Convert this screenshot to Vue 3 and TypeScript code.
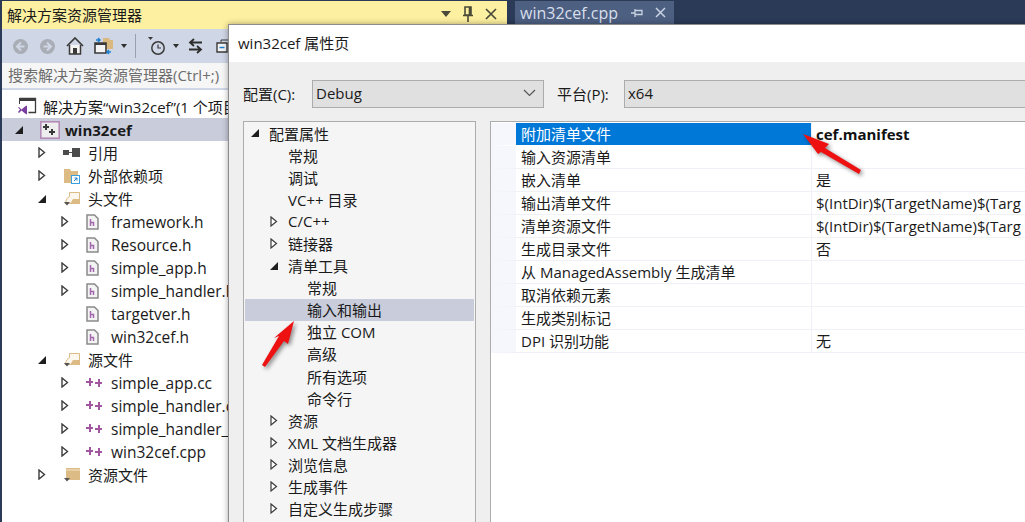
<template>
  <div class="ide">
    <!-- 解决方案资源管理器 -->
    <aside class="explorer">
      <header class="pane-title">
        <span>解决方案资源管理器</span>
        <div class="pane-actions">
          <svg width="10" height="6" viewBox="0 0 10 6"><path d="M0 0h10L5 6z" fill="#4a4a3a" /></svg>
          <svg width="12" height="16" viewBox="0 0 12 16"><path d="M3 1h6v8H3zM1 9.5h10M6 10v6M7.5 1v8" fill="none" stroke="#4a4a3a" stroke-width="1.6" /></svg>
          <svg width="12" height="12" viewBox="0 0 12 12"><path d="M1 1l10 10M11 1L1 11" stroke="#4a4a3a" stroke-width="1.7" /></svg>
        </div>
      </header>

      <div class="toolbar">
        <svg class="tb-back" width="15" height="15" viewBox="0 0 15 15"><circle cx="7.5" cy="7.5" r="7.5" fill="#a9adb5" /><path d="M8 3.5L4 7.5l4 4M4.5 7.5h7" fill="none" stroke="#cfd6e5" stroke-width="2" /></svg>
        <svg class="tb-forward" width="15" height="15" viewBox="0 0 15 15"><circle cx="7.5" cy="7.5" r="7.5" fill="#a9adb5" /><path d="M7 3.5l4 4-4 4M10.5 7.5h-7" fill="none" stroke="#cfd6e5" stroke-width="2" /></svg>
        <svg class="tb-home" width="18" height="18" viewBox="0 0 18 18"><path d="M1 9l8-8 8 8" fill="none" stroke="#3a3a3a" stroke-width="1.7" /><path d="M3.5 8v9h11V8" fill="#f4f4f4" stroke="#3a3a3a" stroke-width="1.5" /><path d="M7 17v-6h4v6" fill="#3a3a3a" /></svg>
        <svg class="tb-sync" width="19" height="18" viewBox="0 0 19 18"><path d="M9 1h6l1 2h3v9H9z" fill="#d9b97f" /><path d="M1 6h11v10H1z" fill="#f4f4f4" stroke="#3a3a3a" stroke-width="1.6" /><path d="M1 6h11v2H1z" fill="#3a3a3a" /><path d="M2 3h4M4 1l2 2-2 2" fill="none" stroke="#1a7fd0" stroke-width="1.4" /><path d="M17 15h-4M15 13l-2 2 2 2" fill="none" stroke="#1a7fd0" stroke-width="1.4" /></svg>
        <i class="tb-caret"></i>
        <span class="tb-sep"></span>
        <svg class="tb-clock" width="18" height="20" viewBox="0 0 18 20"><path d="M0 1h5L2.5 4z" fill="#3a3a3a" /><circle cx="10" cy="12" r="6.2" fill="none" stroke="#3a3a3a" stroke-width="1.5" /><path d="M10 8.5V12h3" fill="none" stroke="#3a3a3a" stroke-width="1.2" /></svg>
        <i class="tb-caret tb-caret-clock"></i>
        <svg class="tb-arrows" width="15" height="16" viewBox="0 0 15 16"><path d="M14 4.5H3M6 1L2 4.500l4 3.500M1 11.500h11M9 8l4 3.500L9 15" fill="none" stroke="#2e2e2e" stroke-width="1.8" /></svg>
        <svg class="tb-collapse" width="15" height="14" viewBox="0 0 15 14"><path d="M5 3V1h9v8h-2" fill="none" stroke="#3a3a3a" /><path d="M1 4h10v9H1z" fill="#f4f4f4" stroke="#3a3a3a" stroke-width="1.4" /><path d="M3.500 8.500h5" stroke="#1a7fd0" stroke-width="1.500" /></svg>
      </div>

      <div class="search">搜索解决方案资源管理器(Ctrl+;)</div>

      <ul class="file-tree">
        <li
          v-for="row in fileRows"
          :key="row.id"
          class="file-row"
          :class="{ root: row.level < 0, current: row.current, strong: row.current, leaf: row.level === 2 }"
          :style="row.level < 0 ? undefined : { paddingLeft: `${13 + row.level * 23}px` }"
        >
          <span v-if="row.level >= 0" class="expander">
            <svg v-if="row.expander === 'closed'" width="8" height="11" viewBox="0 0 8 11"><path d="M1 1l5.500 4.500L1 10z" fill="#fff" stroke="#3c3c3c" stroke-width="1.400" /></svg>
            <svg v-else-if="row.expander === 'open'" width="8" height="8" viewBox="0 0 8 8"><path d="M8 0v8H0z" fill="#1e1e1e" /></svg>
          </span>

          <span class="file-icon">
            <svg v-if="row.icon === 'solution'" width="20" height="19" viewBox="0 0 20 19">
              <path d="M1.500 1.500h16v14h-7" fill="none" stroke="#3c3c3c" stroke-width="1.300" />
              <path d="M1 1h17v3H1zM1 1h1v6H1z" fill="#3c3c3c" />
              <path d="M1 10l2.500 2.500L7 9.500l2-1v9l-2-1-3.500-3L1 16l-1-1 2-2.500-2-2z" fill="#7b3fa0" />
            </svg>
            <svg v-else-if="row.icon === 'project'" width="20" height="18" viewBox="0 0 20 18">
              <rect x="0.800" y="0.800" width="18.400" height="16.400" fill="#eee" stroke="#b58bb8" stroke-width="1.600" />
              <path d="M5 3h2v2h2v2H7v2H5V7H3V5h2zM11 8h2v2h2v2h-2v2h-2v-2H9v-2h2z" fill="#3a3a3a" />
            </svg>
            <svg v-else-if="row.icon === 'ref'" width="17" height="9" viewBox="0 0 17 9">
              <path d="M0 2h6v5H0zM9 0h8v9H9zM6 4h3v1H6z" fill="#4c4c4c" />
            </svg>
            <svg v-else-if="row.icon === 'deps'" width="18" height="16" viewBox="0 0 18 16">
              <path d="M1 1h6l1 2h7v5H8v7H1z" fill="#dcbb85" />
              <rect x="8.500" y="7.500" width="8" height="8" fill="#fff" stroke="#3aa0e0" />
              <path d="M11 13l3-3M11.500 10H14v2.500" fill="none" stroke="#1a7fd0" />
            </svg>
            <svg v-else-if="row.icon === 'folder-open'" width="18" height="16" viewBox="0 0 18 16">
              <path d="M6.500 1.500h10v11H2l2-5 2.500-2z" fill="#fbf7ee" stroke="#dcbb85" />
              <path d="M7 13l3-5h7v5z" fill="#dcbb85" />
              <path d="M1 11h6l-3 3.500z" fill="#555" />
            </svg>
            <svg v-else-if="row.icon === 'folder'" width="18" height="16" viewBox="0 0 18 16">
              <path d="M3 1h14v12H3z" fill="#dcbb85" />
              <path d="M3 3h14" stroke="#f2e4c8" />
              <path d="M1 11h6l-3 3.500z" fill="#555" />
            </svg>
            <svg v-else-if="row.icon === 'header'" width="13" height="16" viewBox="0 0 13 16">
              <path d="M1 1h7.500L12 4.500V15H1z" fill="#f3f3f3" stroke="#8a8a8a" stroke-width="1.500" />
              <path d="M4.500 5v7M4.500 8.500h3V12" fill="none" stroke="#a367ad" stroke-width="1.500" />
            </svg>
            <svg v-else width="16" height="9" viewBox="0 0 16 9">
              <path d="M3 0h2v3h2v2H5v3H3V5H0V3h3zM12 1h2v3h2v2h-2v3h-2V6H9V4h3z" fill="#a2569f" />
            </svg>
          </span>

          <span class="file-label">{{ row.label }}</span>
        </li>
      </ul>
    </aside>

    <!-- 文档标签 -->
    <div class="doc-tabs">
      <div class="doc-tab">
        <span>win32cef.cpp</span>
        <svg width="12" height="10" viewBox="0 0 12 10"><path d="M4 1v8M4 2.500h7v4H4M0 5h4" fill="none" stroke="#c9d2e3" stroke-width="1.300" /></svg>
        <svg width="11" height="11" viewBox="0 0 11 11"><path d="M1 1l9 9M10 1l-9 9" stroke="#c9d2e3" stroke-width="1.500" /></svg>
      </div>
    </div>

    <!-- 属性页窗口 -->
    <section class="dialog">
      <header class="dialog-title">win32cef 属性页</header>

      <div class="dialog-body">
        <div class="config-row">
          <label class="config-label">配置(C):</label>
          <div class="combo combo-config">
            <span>Debug</span>
            <svg width="13" height="8" viewBox="0 0 13 8"><path d="M1 1l5.500 5.500L12 1" fill="none" stroke="#555" stroke-width="1.200" /></svg>
          </div>
          <label class="config-label platform-label">平台(P):</label>
          <div class="combo combo-platform"><span>x64</span></div>
        </div>

        <div class="panels">
          <ul class="prop-tree">
            <li
              v-for="node in propNodes"
              :key="node.id"
              class="prop-node"
              :class="{ selected: node.selected }"
              :style="{ paddingLeft: `${6 + node.level * 19}px` }"
            >
              <span class="prop-expander">
                <svg v-if="node.expander === 'closed'" width="8" height="11" viewBox="0 0 8 11"><path d="M1 1l5.500 4.500L1 10z" fill="#fff" stroke="#3c3c3c" stroke-width="1.200" /></svg>
                <svg v-else-if="node.expander === 'open'" width="8" height="8" viewBox="0 0 8 8"><path d="M8 0v8H0z" fill="#1e1e1e" /></svg>
              </span>
              <span>{{ node.label }}</span>
            </li>
          </ul>

          <div class="prop-grid">
            <div
              v-for="(item, index) in gridRows"
              :key="item.name"
              class="grid-row"
              :class="{ active: index === 0 }"
            >
              <span class="grid-name">{{ item.name }}</span>
              <span class="grid-value">{{ item.value }}</span>
            </div>
          </div>
        </div>
      </div>
    </section>

    <!-- 标注箭头 -->
    <svg class="callouts" width="1025" height="522" viewBox="0 0 1025 522">
      <path d="M803 134L829 144L825 148L861 170L859 174L821 152L818 154z" />
      <path d="M294 321L288 344L284 341L265 367L262 365L279 336L274 338z" />
    </svg>
  </div>
</template>

<script setup lang="ts">
type Expander = 'open' | 'closed' | 'none'
type FileIcon = 'solution' | 'project' | 'ref' | 'deps' | 'folder-open' | 'folder' | 'header' | 'source'

interface FileRow {
  id: number
  label: string
  level: number
  expander: Expander
  icon: FileIcon
  current?: boolean
}

interface PropNode {
  id: number
  label: string
  level: number
  expander: Expander
  selected?: boolean
}

const fileRows: FileRow[] = [
  { id: 1, label: '解决方案“win32cef”(1 个项目)', level: -1, expander: 'none', icon: 'solution' },
  { id: 2, label: 'win32cef', level: 0, expander: 'open', icon: 'project', current: true },
  { id: 3, label: '引用', level: 1, expander: 'closed', icon: 'ref' },
  { id: 4, label: '外部依赖项', level: 1, expander: 'closed', icon: 'deps' },
  { id: 5, label: '头文件', level: 1, expander: 'open', icon: 'folder-open' },
  { id: 6, label: 'framework.h', level: 2, expander: 'closed', icon: 'header' },
  { id: 7, label: 'Resource.h', level: 2, expander: 'closed', icon: 'header' },
  { id: 8, label: 'simple_app.h', level: 2, expander: 'closed', icon: 'header' },
  { id: 9, label: 'simple_handler.h', level: 2, expander: 'closed', icon: 'header' },
  { id: 10, label: 'targetver.h', level: 2, expander: 'none', icon: 'header' },
  { id: 11, label: 'win32cef.h', level: 2, expander: 'none', icon: 'header' },
  { id: 12, label: '源文件', level: 1, expander: 'open', icon: 'folder-open' },
  { id: 13, label: 'simple_app.cc', level: 2, expander: 'closed', icon: 'source' },
  { id: 14, label: 'simple_handler.cc', level: 2, expander: 'closed', icon: 'source' },
  { id: 15, label: 'simple_handler_win.cc', level: 2, expander: 'closed', icon: 'source' },
  { id: 16, label: 'win32cef.cpp', level: 2, expander: 'closed', icon: 'source' },
  { id: 17, label: '资源文件', level: 1, expander: 'closed', icon: 'folder' },
]

const propNodes: PropNode[] = [
  { id: 1, label: '配置属性', level: 0, expander: 'open' },
  { id: 2, label: '常规', level: 1, expander: 'none' },
  { id: 3, label: '调试', level: 1, expander: 'none' },
  { id: 4, label: 'VC++ 目录', level: 1, expander: 'none' },
  { id: 5, label: 'C/C++', level: 1, expander: 'closed' },
  { id: 6, label: '链接器', level: 1, expander: 'closed' },
  { id: 7, label: '清单工具', level: 1, expander: 'open' },
  { id: 8, label: '常规', level: 2, expander: 'none' },
  { id: 9, label: '输入和输出', level: 2, expander: 'none', selected: true },
  { id: 10, label: '独立 COM', level: 2, expander: 'none' },
  { id: 11, label: '高级', level: 2, expander: 'none' },
  { id: 12, label: '所有选项', level: 2, expander: 'none' },
  { id: 13, label: '命令行', level: 2, expander: 'none' },
  { id: 14, label: '资源', level: 1, expander: 'closed' },
  { id: 15, label: 'XML 文档生成器', level: 1, expander: 'closed' },
  { id: 16, label: '浏览信息', level: 1, expander: 'closed' },
  { id: 17, label: '生成事件', level: 1, expander: 'closed' },
  { id: 18, label: '自定义生成步骤', level: 1, expander: 'closed' },
]

const gridRows = [
  { name: '附加清单文件', value: 'cef.manifest' },
  { name: '输入资源清单', value: '' },
  { name: '嵌入清单', value: '是' },
  { name: '输出清单文件', value: '$(IntDir)$(TargetName)$(Targ' },
  { name: '清单资源文件', value: '$(IntDir)$(TargetName)$(Targ' },
  { name: '生成目录文件', value: '否' },
  { name: '从 ManagedAssembly 生成清单', value: '' },
  { name: '取消依赖元素', value: '' },
  { name: '生成类别标记', value: '' },
  { name: 'DPI 识别功能', value: '无' },
]
</script>

<style>
html,
body {
  margin: 0;
  overflow: hidden;
}
</style>

<style scoped>
.ide {
  position: relative;
  display: flex;
  width: 1025px;
  height: 522px;
  overflow: hidden;
  box-sizing: border-box;
  padding: 1px 0 0 2px;
  background: #2a3a57;
  font-family: "Open Sans", "Noto Sans", "Noto Sans CJK SC", sans-serif;
  font-size: 15px;
  color: #1a1a1a;
}

ul {
  margin: 0;
  padding: 0;
  list-style: none;
}

.explorer {
  flex: 0 0 505px;
  display: flex;
  flex-direction: column;
  background: #fff;
}

.pane-title {
  display: flex;
  align-items: center;
  justify-content: space-between;
  flex: 0 0 28px;
  padding: 0 10px 2px 5px;
  box-sizing: border-box;
  background: #fdf0a0;
}

.pane-actions {
  display: flex;
  align-items: center;
  gap: 11px;
}

.toolbar {
  display: flex;
  align-items: center;
  flex: 0 0 34px;
  background: #cfd6e5;
}

.toolbar svg {
  flex: none;
}

.tb-back {
  margin-left: 11px;
}

.tb-forward {
  margin-left: 12px;
}

.tb-home {
  margin-left: 11px;
}

.tb-sync {
  margin-left: 10px;
}

.tb-caret {
  width: 0;
  height: 0;
  margin-left: 8px;
  border-style: solid;
  border-width: 4px 3.500px 0;
  border-color: #2e2e2e transparent transparent;
}

.tb-sep {
  width: 1px;
  height: 24px;
  margin-left: 8px;
  background: #99a0ae;
}

.tb-clock {
  margin-left: 12px;
}

.tb-caret-clock {
  margin-left: 7px;
}

.tb-arrows {
  margin-left: 9px;
}

.tb-collapse {
  margin-left: 13px;
}

.search {
  flex: 0 0 27px;
  box-sizing: border-box;
  padding: 0 0 0 6px;
  line-height: 25px;
  background: #f6f6f6;
  border-bottom: 2px solid #cfd6e5;
  color: #6d6d6d;
  white-space: nowrap;
  overflow: hidden;
}

.file-tree {
  flex: 1;
  padding-top: 5px;
}

.file-row {
  display: flex;
  align-items: center;
  height: 23px;
  white-space: nowrap;
  overflow: hidden;
}

.file-row.root {
  padding-left: 16px;
}

.file-row.root .file-icon {
  width: 26px;
}

.file-row.leaf {
  font-size: 15.500px;
}

.file-row.current {
  background: #c9ccdb;
}

.file-row.strong .file-label {
  font-weight: 700;
}

.expander {
  flex: 0 0 25px;
  display: flex;
  align-items: center;
}

.file-icon {
  flex: 0 0 25px;
  display: flex;
  align-items: center;
}

.doc-tabs {
  flex: 1;
  padding-left: 8px;
}

.doc-tab {
  display: flex;
  align-items: center;
  width: 159px;
  height: 23px;
  box-sizing: border-box;
  padding: 0 8px 0 5px;
  background: #4d6082;
  color: #d8dfeb;
  font-size: 16px;
}

.doc-tab span {
  margin-right: 13px;
}

.doc-tab svg + svg {
  margin-left: 12px;
}

.dialog {
  position: absolute;
  left: 228px;
  top: 24px;
  display: flex;
  flex-direction: column;
  width: 830px;
  height: 520px;
  border: 1px solid #8c8c8c;
  background: #efefef;
  box-shadow: 0 0 6px rgba(0, 0, 0, 0.35);
}

.dialog-title {
  flex: 0 0 37px;
  padding-left: 9px;
  line-height: 37px;
  background: #fff;
}

.dialog-body {
  flex: 1;
  display: flex;
  flex-direction: column;
  gap: 13px;
  padding: 18px 0 0 14px;
  min-height: 0;
}

.config-row {
  display: flex;
  align-items: center;
}

.config-label {
  width: 69px;
  padding-bottom: 2px;
}

.platform-label {
  width: 67px;
  margin-left: 13px;
}

.combo {
  display: flex;
  align-items: center;
  justify-content: space-between;
  height: 28px;
  box-sizing: border-box;
  padding: 0 7px 2px 3px;
  border: 1px solid #acacac;
  background: #e0e0e0;
}

.combo-config {
  width: 232px;
}

.combo-platform {
  width: 420px;
}

.panels {
  flex: 1;
  display: flex;
  gap: 14px;
  min-height: 0;
}

.prop-tree {
  flex: 0 0 233px;
  box-sizing: border-box;
  padding: 0 1px;
  border: 1px solid #acacac;
  background: #f5f5f5;
}

.prop-node {
  display: flex;
  align-items: center;
  height: 22.100px;
  white-space: nowrap;
}

.prop-node.selected {
  background: #c9ccdb;
}

.prop-expander {
  flex: 0 0 18px;
  display: flex;
  align-items: center;
}

.prop-grid {
  flex: 0 0 560px;
  box-sizing: border-box;
  padding-top: 1px;
  border: 1px solid #acacac;
  background: #fff;
}

.grid-row {
  display: flex;
  height: 23px;
  box-sizing: border-box;
  border-bottom: 1px solid #f0f1f6;
  border-left: 25px solid #f5f7fc;
  line-height: 22px;
  white-space: nowrap;
}

.grid-name {
  flex: 0 0 296px;
  box-sizing: border-box;
  padding-left: 5px;
  border-right: 1px solid #f0f1f6;
}

.grid-value {
  padding-left: 4px;
  overflow: hidden;
}

.grid-row.active {
  border-bottom-color: #fff;
}

.grid-row.active .grid-name {
  background: #0078d7;
  color: #fff;
}

.grid-row.active .grid-value {
  font-weight: 700;
  color: #111;
}

.callouts {
  position: absolute;
  left: 0;
  top: 0;
  pointer-events: none;
  fill: #ee1111;
  filter: drop-shadow(2px 2px 2px rgba(0, 0, 0, 0.45));
}
</style>
